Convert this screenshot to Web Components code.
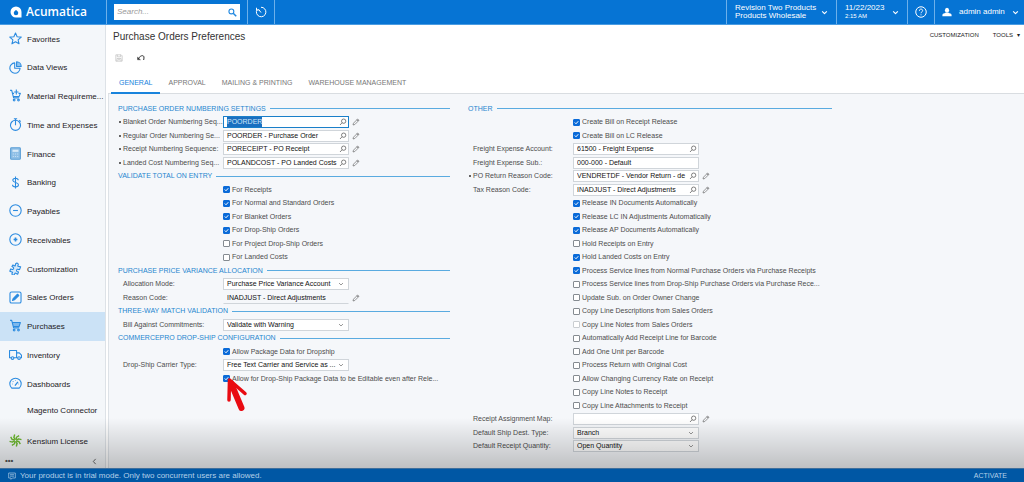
<!DOCTYPE html>
<html lang="en">
<head>
<meta charset="utf-8">
<title>Purchase Orders Preferences</title>
<style>
html, body { margin: 0; height: 100%; }
body { font: 8px/12px "Liberation Sans", Arial, sans-serif; color: #333; background: #fff; }
</style>
</head>
<body>
<app-shell>
  <app-bar slot="top"></app-bar>
  <side-nav slot="nav">
    <nav-item icon="star">Favorites</nav-item>
    <nav-item icon="pie">Data Views</nav-item>
    <nav-item icon="cartplus">Material Requireme...</nav-item>
    <nav-item icon="timer">Time and Expenses</nav-item>
    <nav-item icon="calc">Finance</nav-item>
    <nav-item icon="dollar">Banking</nav-item>
    <nav-item icon="minus">Payables</nav-item>
    <nav-item icon="plus">Receivables</nav-item>
    <nav-item icon="puzzle">Customization</nav-item>
    <nav-item icon="note">Sales Orders</nav-item>
    <nav-item icon="cart" active>Purchases</nav-item>
    <nav-item icon="truck">Inventory</nav-item>
    <nav-item icon="gauge">Dashboards</nav-item>
    <nav-item>Magento Connector</nav-item>
    <nav-item icon="pinwheel">Kensium License</nav-item>
  </side-nav>
  <page-head slot="main">Purchase Orders Preferences</page-head>
  <tab-strip slot="main"></tab-strip>
  <pref-form slot="main">
    <pref-column slot="left">
      <pref-heading>PURCHASE ORDER NUMBERING SETTINGS</pref-heading>
      <pref-field required kind="lookup" edit focused label="Blanket Order Numbering Seq..." value="POORDER"></pref-field>
      <pref-field required kind="lookup" edit label="Regular Order Numbering Se..." value="POORDER - Purchase Order"></pref-field>
      <pref-field required kind="lookup" edit label="Receipt Numbering Sequence:" value="PORECEIPT - PO Receipt"></pref-field>
      <pref-field required kind="lookup" edit label="Landed Cost Numbering Seq..." value="POLANDCOST - PO Landed Costs"></pref-field>
      <pref-heading>VALIDATE TOTAL ON ENTRY</pref-heading>
      <pref-check checked>For Receipts</pref-check>
      <pref-check checked>For Normal and Standard Orders</pref-check>
      <pref-check checked>For Blanket Orders</pref-check>
      <pref-check checked>For Drop-Ship Orders</pref-check>
      <pref-check>For Project Drop-Ship Orders</pref-check>
      <pref-check>For Landed Costs</pref-check>
      <pref-heading>PURCHASE PRICE VARIANCE ALLOCATION</pref-heading>
      <pref-field kind="select" label="Allocation Mode:" value="Purchase Price Variance Account"></pref-field>
      <pref-field kind="readonly" edit label="Reason Code:" value="INADJUST - Direct Adjustments"></pref-field>
      <pref-heading>THREE-WAY MATCH VALIDATION</pref-heading>
      <pref-field kind="select" label="Bill Against Commitments:" value="Validate with Warning"></pref-field>
      <pref-heading>COMMERCEPRO DROP-SHIP CONFIGURATION</pref-heading>
      <pref-check checked>Allow Package Data for Dropship</pref-check>
      <pref-field kind="select" label="Drop-Ship Carrier Type:" value="Free Text Carrier and Service as ..."></pref-field>
      <pref-check checked pointer>Allow for Drop-Ship Package Data to be Editable even after Rele...</pref-check>
    </pref-column>
    <pref-column slot="right">
      <pref-heading>OTHER</pref-heading>
      <pref-check checked>Create Bill on Receipt Release</pref-check>
      <pref-check checked>Create Bill on LC Release</pref-check>
      <pref-field kind="lookup" label="Freight Expense Account:" value="61500 - Freight Expense"></pref-field>
      <pref-field kind="text" label="Freight Expense Sub.:" value="000-000 - Default"></pref-field>
      <pref-field required kind="lookup" edit label="PO Return Reason Code:" value="VENDRETDF - Vendor Return - de"></pref-field>
      <pref-field kind="lookup" edit label="Tax Reason Code:" value="INADJUST - Direct Adjustments"></pref-field>
      <pref-check checked>Release IN Documents Automatically</pref-check>
      <pref-check checked>Release LC IN Adjustments Automatically</pref-check>
      <pref-check checked>Release AP Documents Automatically</pref-check>
      <pref-check>Hold Receipts on Entry</pref-check>
      <pref-check checked>Hold Landed Costs on Entry</pref-check>
      <pref-check checked>Process Service lines from Normal Purchase Orders via Purchase Receipts</pref-check>
      <pref-check>Process Service lines from Drop-Ship Purchase Orders via Purchase Rece...</pref-check>
      <pref-check>Update Sub. on Order Owner Change</pref-check>
      <pref-check>Copy Line Descriptions from Sales Orders</pref-check>
      <pref-check disabled>Copy Line Notes from Sales Orders</pref-check>
      <pref-check>Automatically Add Receipt Line for Barcode</pref-check>
      <pref-check>Add One Unit per Barcode</pref-check>
      <pref-check>Process Return with Original Cost</pref-check>
      <pref-check>Allow Changing Currency Rate on Receipt</pref-check>
      <pref-check>Copy Line Notes to Receipt</pref-check>
      <pref-check>Copy Line Attachments to Receipt</pref-check>
      <pref-field kind="lookup" edit label="Receipt Assignment Map:" value=""></pref-field>
      <pref-field kind="select" label="Default Ship Dest. Type:" value="Branch"></pref-field>
      <pref-field kind="select" label="Default Receipt Quantity:" value="Open Quantity"></pref-field>
    </pref-column>
  </pref-form>
  <status-bar slot="bottom"></status-bar>
</app-shell>

<script>
const blade = '<path d="M12 10.500L9 6.500 10.500 1"/>';
const blades = [0, 45, 90, 135, 180, 225, 270, 315].map(a => `<g transform="rotate(${a} 12 12)">${blade}</g>`).join("");

const ICONS = {
  star: '<path d="M12 1.800l3 7 7.600.6-5.800 5 1.800 7.400L12 17.900 5.400 21.800l1.800-7.400-5.800-5L9 8.800z"/>',
  pie: '<path d="M10.500 3.500a9.500 9.500 0 1 0 10 10h-10z"/><path d="M14 1.500v8.500h8.500A8.500 8.500 0 0 0 14 1.500z" fill="#8ec3ee"/>',
  cart: '<path d="M6 6.500h15l-2 8H8z" fill="#7db8ec" stroke="none"/><path d="M2 2.500h3l3.500 14h10.500M5.800 6.500H21l-2.500 7.500H8"/><circle cx="9.500" cy="20.500" r="1.600"/><circle cx="17.500" cy="20.500" r="1.600"/>',
  cartplus: '<path d="M2 2.500h3l3.500 14h10.500M5.800 8l3.500 0M17.500 8H21l-2.500 6H8M13.500 1v9M9.500 5.500h8"/><circle cx="9.500" cy="20.500" r="1.600"/><circle cx="17.500" cy="20.500" r="1.600"/>',
  timer: '<circle cx="12" cy="13.500" r="9.300"/><path d="M9 1.500h6M12 1.500v12M19 4l2.500 2.500"/>',
  calc: '<rect x="3" y="1.500" width="18" height="21" rx="1.500" fill="#8fbfe6" stroke="#5b9fd6"/><rect x="6.500" y="5" width="11" height="4" fill="#d8eaf8" stroke="none"/><path d="M7 13h2M11 13h2M15 13h2M7 17.500h2M11 17.500h2M15 17.500h2" stroke="#c4def3"/>',
  dollar: '<path d="M17 8c0-2.500-2-4-5-4S7 5.500 7 8c0 5 10.500 3 10.500 8 0 2.500-2.500 4-5.500 4s-5.500-1.500-5.500-4M12 1v22"/>',
  minus: '<circle cx="12" cy="12" r="10.500"/><path d="M7.500 12h9"/>',
  plus: '<circle cx="12" cy="12" r="10.500"/><path d="M8.500 12h7M12 8.500v7" stroke-width="3"/>',
  puzzle: '<path d="M7 5.500l4 2c1.500-.5 0-2.500 1.500-4.500 2-2 5-.5 4.500 2-.5 1.500-1 2-.5 3l5 1-2 5c-1.500.5-2.500-1.500-4.500-.5-2 1.500-1 4.500 1.500 4.500l1 .5-1.500 4-4.500-2c-1.500.5-.5 2.500-2.500 3.500-2.500 1-4.500-1.500-3-3.500l.5-1.500-5-2 1.500-4c1.500-.5 2.500 1.500 4.500.5 2-1.500 1-4-1-4.500l-1-.5z" fill="#d6e9f9"/>',
  note: '<rect x="1.800" y="1.800" width="20.400" height="20.400" rx="3"/><path d="M6.500 17.500l1.200-3.500 8-8 2.300 2.300-8 8z" fill="#2b8be0"/>',
  truck: '<path d="M4 18H1V4.500h13V18H9M14 9h5l4 4v5h-2M16 18h-2"/><circle cx="6.500" cy="18.500" r="2.500"/><circle cx="18.500" cy="18.500" r="2.500"/>',
  gauge: '<path d="M5 20.500a10.500 10.500 0 1 1 14 0z"/><path d="M11 16l5.500-7" stroke-width="2.500"/><path d="M5.500 13h1M17.500 13h1M12 5.500v1M7 8l1 1"/>',
  pinwheel: `<g stroke="#6cb82e" stroke-width="2.600">${blades}</g>`,
  search: '<circle cx="9" cy="9" r="6.500"/><path d="M14 14l8 8" stroke-width="4"/>',
  lookup: '<circle cx="14" cy="9.500" r="6.500"/><path d="M9 14.500L3 21"/>',
  pencil: '<path d="M3 21l1.500-5.500L17 3l4 4L8.500 19.500z"/><path d="M15 5l4 4" stroke-width="3"/>',
  history: '<path d="M4.200 7A9.500 9.500 0 1 0 12 2.500M12 13L7 6.500M3 3.500V8h4.500"/>',
  help: '<circle cx="12" cy="12" r="10.500"/><path d="M8.800 9.500c0-4.500 6.500-4.300 6.500-.3 0 2.500-3.300 2.500-3.300 5.300M12 16.800v1.800"/>',
  user: '<g fill="#fff" stroke="none"><ellipse cx="12" cy="7.500" rx="5" ry="6"/><path d="M1 22v-3c0-3 5-3.500 7.500-5h7c2.500 1.500 7.500 2 7.500 5v3z"/></g>',
  down: '<path d="M4 8l8 8 8-8"/>',
  left: '<path d="M16 3l-8 9 8 9"/>',
  save: '<path d="M2.500 2.500h16l3 3v16h-19zM7 2.500v6h10v-6M6 21.500v-8h12v8M9 17h6"/>',
  undo: '<path d="M3 15C8 8 12 5 16 5c5 0 6 4 4 13"/><path d="M1.500 9v8.500h9z" fill="currentColor" stroke-width="1"/>',
  comment: '<path d="M2 3h20v15h-9l-4 4v-4H2zM6 8h12M6 12.500h12"/>'
};

const icon = (name, width = 2) =>
  `<svg viewBox="0 0 24 24" fill="none" stroke="currentColor" stroke-width="${width}" stroke-linejoin="round" aria-hidden="true">${ICONS[name]}</svg>`;

const BASE = `
  *, *::before, *::after { box-sizing: border-box; }
  svg { display: block; flex: none; }
  button, input, select { font: inherit; color: inherit; margin: 0; padding: 0; border: 0; background: none; border-radius: 0; }
  a { color: inherit; text-decoration: none; }
`;

function define(name, css, render, ready) {
  customElements.define(name, class extends HTMLElement {
    constructor() {
      super();
      this.attachShadow({ mode: "open" });
    }
    connectedCallback() {
      this.shadowRoot.innerHTML = `<style>${BASE}${css}</style>${render(this)}`;
      if (ready) ready(this);
    }
  });
}

define("app-shell", `
  :host { display: grid; position: relative; min-height: 100vh;
    grid-template: auto minmax(0, 1fr) auto / 106px minmax(0, 1fr); }
  .top, .bottom { grid-column: 1 / -1; }
  main { min-width: 0; display: flex; flex-direction: column; padding-left: 2px; }
  .shade { grid-area: 2 / 1 / 3 / 3; align-self: end; height: 50px; z-index: 2; pointer-events: none;
    background: linear-gradient(rgba(0,0,0,0), rgba(0,0,0,.06) 25%, rgba(0,0,0,.22)); }
  .nav { grid-area: 2 / 1; }
  main { grid-area: 2 / 2; }
`, () => `
  <div class="top"><slot name="top"></slot></div>
  <div class="nav"><slot name="nav"></slot></div>
  <main><slot name="main"></slot></main>
  <div class="shade"></div>
  <div class="bottom"><slot name="bottom"></slot></div>
`);

define("app-bar", `
  :host { display: flex; box-sizing: border-box; height: 25px; background: #0674d4; color: #fff; border-bottom: 1px solid #4a9ce2; }
  .brand { width: 106px; display: flex; align-items: center; gap: 4px; padding-left: 10px;
    font: 600 12px/24px "Open Sans", sans-serif; }
  .brand svg { width: 12px; height: 12px; }
  .cell { display: flex; align-items: center; border-left: 1px solid #6db0ea; }
  .search { padding: 0 7px; width: 141px; }
  .box { display: flex; align-items: center; width: 100%; height: 16px; background: #fff; color: #2389e0; padding: 0 3px; }
  .box input { flex: 1; min-width: 0; font-style: italic; outline: 0; color: #333; }
  .box input::placeholder { color: #999; opacity: 1; }
  .box svg { width: 9px; height: 9px; }
  .tool { width: 27px; justify-content: center; }
  .tool svg { width: 12px; height: 12px; }
  .rest { flex: 1; }
  .two { text-align: left; line-height: 8px; padding: 0 8px; justify-content: space-between; }
  .company { width: 110px; }
  .date { width: 71px; }
  small { display: block; font-size: 6px; line-height: 8px; }
  .lines { white-space: nowrap; }
  .chev { flex: none; width: 7px; height: 7px; }
  .user { width: 90px; gap: 7px; padding-left: 7px; }
  .user .face { width: 10px; height: 10px; }
`, () => `
  <a class="brand" href="#"><svg viewBox="0 0 24 24" aria-hidden="true"><path fill="#fff" fill-rule="evenodd" d="M12 1a11 11 0 0 0 0 22h11V12A11 11 0 0 0 12 1zm0 7c3 2.500 4.500 4 4.500 6a4.500 4.500 0 0 1-9 0c0-2 1.500-3.500 4.500-6z"/></svg>Acumatica</a>
  <div class="cell search"><label class="box"><input type="search" placeholder="Search..." aria-label="Search">${icon("search", 3)}</label></div>
  <button class="cell tool" aria-label="Recent">${icon("history")}</button>
  <div class="cell rest"></div>
  <button class="cell two company"><span class="lines">Revision Two Products<br>Products Wholesale</span><span class="chev">${icon("down", 4)}</span></button>
  <button class="cell two date"><span class="lines">11/22/2023<small>2:15 AM</small></span><span class="chev">${icon("down", 4)}</span></button>
  <button class="cell tool" aria-label="Help">${icon("help")}</button>
  <button class="cell user"><span class="face">${icon("user")}</span><span>admin admin</span><span class="chev">${icon("down", 4)}</span></button>
`);

define("side-nav", `
  :host { display: flex; flex-direction: column; box-sizing: border-box; height: 100%; background: #f4f7fa; border-right: 1px solid #dde2e7; }
  nav { display: grid; grid-auto-rows: 29px 28px 29px 29px; flex: 1; align-content: start; }
  ::slotted(:nth-last-child(2)) { height: 23px; }
  .foot { display: flex; justify-content: space-between; align-items: flex-start; height: 11px; padding: 0 7px 0 5px; color: #555; line-height: 6px; font-weight: 700; }
  .foot button { height: 8px; }
  .foot svg { width: 7px; height: 7px; }
`, () => `
  <nav><slot></slot></nav>
  <div class="foot"><button aria-label="More items">•••</button><button aria-label="Collapse menu">${icon("left", 3)}</button></div>
`);

define("nav-item", `
  :host { display: block; color: #1d2125; }
  a { display: grid; grid-template-columns: 13px minmax(0, 1fr); gap: 5px; align-items: center; height: 100%; padding-left: 9px; white-space: nowrap; }
  .pic { color: #2b8be0; height: 15px; }
  :host([active]) { background: #cbe2f6; }
`, el => `<a href="#"><span class="pic">${el.getAttribute("icon") ? icon(el.getAttribute("icon")) : ""}</span><span><slot></slot></span></a>`);

define("page-head", `
  :host { display: block; padding: 4px 4px 0 5px; }
  header { display: flex; justify-content: space-between; align-items: flex-start; height: 16px; }
  h1 { margin: 0; font-size: 10px; line-height: 16px; font-weight: 400; color: #333; }
  .links { display: flex; gap: 14px; font-size: 6px; line-height: 12px; color: #222; }
  .links span { margin-left: 4px; }
  .tools { display: flex; align-items: center; gap: 14px; height: 26px; padding-left: 2px; }
  .tools svg { width: 8px; height: 8px; }
  .tools button { color: #333; }
  .tools button:disabled { color: #bbb; }
`, () => `
  <header><h1><slot></slot></h1><div class="links"><button>CUSTOMIZATION</button><button>TOOLS<span>▾</span></button></div></header>
  <div class="tools"><button disabled aria-label="Save">${icon("save")}</button><button aria-label="Undo">${icon("undo", 3)}</button></div>
`);

define("tab-strip", `
  :host { display: flex; height: 22px; padding-left: 3px; border-bottom: 1px solid #d9dde1; font-size: 7px; color: #777; }
  button { padding: 3px 8px 0; margin-bottom: -1px; border-bottom: 2px solid transparent; }
  button[aria-selected="true"] { color: #1883dc; border-color: #1883dc; }
`, () => ["GENERAL", "APPROVAL", "MAILING & PRINTING", "WAREHOUSE MANAGEMENT"]
  .map((t, i) => `<button role="tab" aria-selected="${i === 0}">${t.replace("&", "&amp;")}</button>`).join(""));

define("pref-form", `
  :host { display: grid; flex: 1; grid-template-columns: minmax(0, 332px) minmax(0, 364px); gap: 18px; align-content: start;
    padding: 8px 9px 4px; background: #f5f7fa; border-left: 1px solid #dde2e7; }
`, () => `<slot name="left"></slot><slot name="right"></slot>`);

define("pref-column", `
  :host { display: grid; grid-auto-rows: 13px 14px; align-content: start; font-size: 7px; line-height: 12px; color: #4c4c4c; }
`, () => `<slot></slot>`);

define("pref-heading", `
  :host { display: flex; align-items: center; gap: 4px; color: #1f86cf; white-space: nowrap; }
  h2 { margin: 0; font-size: 7px; font-weight: 400; line-height: 12px; }
  i { flex: 1; height: 1px; background: #5aabe0; }
`, () => `<h2><slot></slot></h2><i></i>`);

define("pref-field", `
  :host { display: grid; grid-template-columns: 105px 126px 11px; align-items: center; min-width: 0; }
  label { padding-left: 5px; white-space: nowrap; position: relative; }
  :host([required]) label::before { content: ""; position: absolute; left: 1px; top: 5px; width: 2px; height: 2px; border-radius: 1px; background: #333; }
  .box { display: flex; align-items: center; height: 12px; border: 1px solid #d0d5da; background: #fff; color: #111; padding: 0 1px 0 3px; }
  .box.readonly { background: none; border-color: transparent transparent #d0d5da; }
  .box.focused { border: 1px solid #1a7fc9; }
  input, select { flex: 1; min-width: 0; width: 100%; height: 10px; line-height: 10px; outline: 0; appearance: none; }
  input::selection { background: #1a6fc0; color: #cfe4f7; }
  .box svg { width: 8px; height: 8px; color: #444; }
  .box.select svg { width: 6px; height: 6px; color: #777; margin-right: 3px; }
  .edit { margin-left: 3px; width: 8px; height: 8px; color: #666; }
  .edit svg { width: 8px; height: 8px; }
`, el => {
  const kind = el.getAttribute("kind");
  const value = el.getAttribute("value");
  const control = kind === "select"
    ? `<select id="c"><option>${value}</option></select>${icon("down", 3)}`
    : `<input id="c" type="text" value="${value}" ${kind === "readonly" ? "readonly" : ""}>${kind === "lookup" ? icon("lookup", 2) : ""}`;
  return `<label for="c">${el.getAttribute("label")}</label>
    <span class="box ${kind} ${el.hasAttribute("focused") ? "focused" : ""}">${control}</span>
    ${el.hasAttribute("edit") ? `<button class="edit" aria-label="Edit">${icon("pencil", 2)}</button>` : ""}`;
}, el => {
  if (el.hasAttribute("focused")) {
    const input = el.shadowRoot.querySelector("input");
    input.focus();
    input.select();
  }
});

define("pref-check", `
  :host { display: flex; align-items: center; padding-left: 105px; position: relative; white-space: nowrap; min-width: 0; }
  label { display: flex; align-items: center; gap: 2px; }
  input { appearance: none; width: 7px; height: 7px; border: 1px solid #858b91; border-radius: 1px; background: #fff; }
  input:checked { border-color: #0b6bd8; background: #0b6bd8 url('data:image/svg+xml,<svg xmlns="http://www.w3.org/2000/svg" viewBox="0 0 10 10"><path d="M1.500 5l2.500 2.500L8.500 2.500" fill="none" stroke="white" stroke-width="2"/></svg>'); }
  input:disabled { border-color: #c9cdd1; }
  .pointer { position: absolute; left: 108px; top: 5px; width: 24px; height: 36px; z-index: 1; }
`, el => `
  <label><input type="checkbox" ${el.hasAttribute("checked") ? "checked" : ""} ${el.hasAttribute("disabled") ? "disabled" : ""}><span><slot></slot></span></label>
  ${el.hasAttribute("pointer") ? '<svg class="pointer" viewBox="0 0 24 36" aria-hidden="true"><g fill="none" stroke="#e90b12" stroke-linecap="round" stroke-linejoin="round"><path d="M3.500 3L3 23M3.500 3L19 16.500" stroke-width="3.500"/><path d="M5 6L15.500 31" stroke-width="6"/></g></svg>' : ""}
`);

define("status-bar", `
  :host { display: flex; align-items: center; box-sizing: border-box; height: 14px; padding: 0 17px 0 8px; background: #0057a4; color: #b4d0e8; border-top: 1px solid #3f6f9c; }
  svg { width: 8px; height: 8px; margin-right: 4px; }
  span { flex: 1; }
  a { font-size: 7px; }
`, () => `${icon("comment")}<span>Your product is in trial mode. Only two concurrent users are allowed.</span><a href="#">ACTIVATE</a>`);
</script>
</body>
</html>
